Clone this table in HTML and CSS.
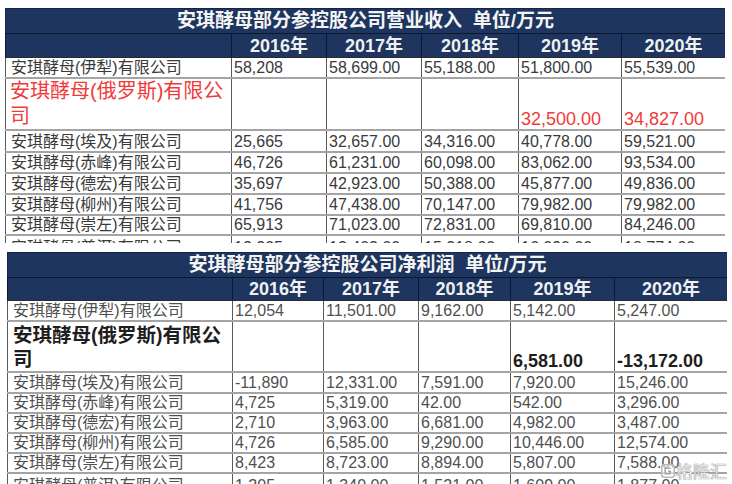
FILE: index.html
```html
<!DOCTYPE html>
<html lang="zh">
<head>
<meta charset="utf-8">
<link rel="stylesheet" href="styles.css">
</head>
<body>
<div class="page">
  <div class="clip clip-a">
    <table class="sheet sheet-a">
      <colgroup>
        <col class="c-name"><col class="c1"><col class="c2"><col class="c3"><col class="c4"><col class="c5">
      </colgroup>
      <tr class="title-row"><td colspan="6">安琪酵母部分参控股公司营业收入&nbsp;&nbsp;单位/万元</td></tr>
      <tr class="head-row"><td></td><td>2016年</td><td>2017年</td><td>2018年</td><td>2019年</td><td>2020年</td></tr>
      <tr class="r21"><td class="name">安琪酵母(伊犁)有限公司</td><td>58,208</td><td>58,699.00</td><td>55,188.00</td><td>51,800.00</td><td>55,539.00</td></tr>
      <tr class="tall red"><td class="name">安琪酵母(俄罗斯)有限公司</td><td></td><td></td><td></td><td>32,500.00</td><td>34,827.00</td></tr>
      <tr class="r22"><td class="name">安琪酵母(埃及)有限公司</td><td>25,665</td><td>32,657.00</td><td>34,316.00</td><td>40,778.00</td><td>59,521.00</td></tr>
      <tr class="r21"><td class="name">安琪酵母(赤峰)有限公司</td><td>46,726</td><td>61,231.00</td><td>60,098.00</td><td>83,062.00</td><td>93,534.00</td></tr>
      <tr class="r21"><td class="name">安琪酵母(德宏)有限公司</td><td>35,697</td><td>42,923.00</td><td>50,388.00</td><td>45,877.00</td><td>49,836.00</td></tr>
      <tr class="r21"><td class="name">安琪酵母(柳州)有限公司</td><td>41,756</td><td>47,438.00</td><td>70,147.00</td><td>79,982.00</td><td>79,982.00</td></tr>
      <tr class="r20"><td class="name">安琪酵母(崇左)有限公司</td><td>65,913</td><td>71,023.00</td><td>72,831.00</td><td>69,810.00</td><td>84,246.00</td></tr>
      <tr class="r23"><td class="name">安琪酵母(普洱)有限公司</td><td>12,305</td><td>13,402.00</td><td>15,218.00</td><td>16,090.00</td><td>18,774.00</td></tr>
    </table>
  </div>

  <div class="clip clip-b">
    <table class="sheet sheet-b">
      <colgroup>
        <col class="d-name"><col class="d1"><col class="d2"><col class="d3"><col class="d4"><col class="d5">
      </colgroup>
      <tr class="title-row"><td colspan="6">安琪酵母部分参控股公司净利润&nbsp;&nbsp;单位/万元</td></tr>
      <tr class="head-row h23"><td></td><td>2016年</td><td>2017年</td><td>2018年</td><td>2019年</td><td>2020年</td></tr>
      <tr class="r21"><td class="name">安琪酵母(伊犁)有限公司</td><td>12,054</td><td>11,501.00</td><td>9,162.00</td><td>5,142.00</td><td>5,247.00</td></tr>
      <tr class="tall2 bold"><td class="name">安琪酵母(俄罗斯)有限公司</td><td></td><td></td><td></td><td>6,581.00</td><td>-13,172.00</td></tr>
      <tr class="r21"><td class="name">安琪酵母(埃及)有限公司</td><td>-11,890</td><td>12,331.00</td><td>7,591.00</td><td>7,920.00</td><td>15,246.00</td></tr>
      <tr class="r20"><td class="name">安琪酵母(赤峰)有限公司</td><td>4,725</td><td>5,319.00</td><td>42.00</td><td>542.00</td><td>3,296.00</td></tr>
      <tr class="r20"><td class="name">安琪酵母(德宏)有限公司</td><td>2,710</td><td>3,963.00</td><td>6,681.00</td><td>4,982.00</td><td>3,487.00</td></tr>
      <tr class="r20"><td class="name">安琪酵母(柳州)有限公司</td><td>4,726</td><td>6,585.00</td><td>9,290.00</td><td>10,446.00</td><td>12,574.00</td></tr>
      <tr class="r19"><td class="name">安琪酵母(崇左)有限公司</td><td>8,423</td><td>8,723.00</td><td>8,894.00</td><td>5,807.00</td><td>7,588.00</td></tr>
      <tr class="r23"><td class="name">安琪酵母(普洱)有限公司</td><td>1,205</td><td>1,340.00</td><td>1,521.00</td><td>1,609.00</td><td>1,877.00</td></tr>
    </table>
  </div>

  <div class="watermark">
    <svg class="wm-icon" width="14" height="14" viewBox="0 0 14 14">
      <rect x="0.75" y="0.75" width="12.5" height="12.5" rx="2.5" fill="rgba(255,255,255,0.6)" stroke="#b8b8b8" stroke-width="1.5"/>
      <path d="M9.6 4.2 H4.2 V9.8 H9.2 V7.2 H7" fill="none" stroke="#a8a8a8" stroke-width="1.6"/>
    </svg>
    <span class="wm-text">格隆汇</span>
  </div>
</div>
</body>
</html>
```

FILE: styles.css
```css
html, body {
  margin: 0;
  padding: 0;
  background: #ffffff;
}

.page {
  position: relative;
  width: 732px;
  height: 484px;
  overflow: hidden;
  font-family: "Liberation Sans", "Noto Sans CJK SC", sans-serif;
}

.clip {
  overflow: hidden;
}

.clip-a {
  margin: 8px 0 0 5px;
  width: 720px;
  height: 235px;
}

.clip-b {
  margin: 9px 0 0 7px;
  width: 720px;
  height: 232px;
}

.sheet {
  border-collapse: collapse;
  table-layout: fixed;
  width: 720px;
}

.sheet td {
  padding: 0 0 0 2px;
  border-left: 1px solid #5a5a5a;
  border-right: 1px solid #5a5a5a;
  border-bottom: 2px solid #a4a4a4;
  font-size: 16px;
  line-height: 18px;
  color: #3a3a3a;
  vertical-align: bottom;
  white-space: nowrap;
  overflow: hidden;
}

.sheet-b td {
  color: #505050;
}

.sheet td.name {
  padding-left: 5px;
}

.c-name { width: 226px; }
.c1 { width: 95px; }
.c2 { width: 95px; }
.c3 { width: 97px; }
.c4 { width: 103px; }
.c5 { width: 104px; }

.d-name { width: 225px; }
.d1 { width: 91px; }
.d2 { width: 95px; }
.d3 { width: 92px; }
.d4 { width: 104px; }
.d5 { width: 113px; }

.title-row td {
  height: 24px;
  background: #1d355f;
  color: #f4f4f4;
  font-size: 19px;
  font-weight: bold;
  text-align: center;
  vertical-align: middle;
  border: 1px solid #14264a;
  border-bottom: 1px solid #0c1830;
  padding: 0;
}

.head-row td {
  height: 23px;
  background: #1d355f;
  color: #f0f0f0;
  font-size: 18px;
  font-weight: bold;
  text-align: center;
  vertical-align: middle;
  border-left: 1px solid #0c1830;
  border-right: 1px solid #0c1830;
  border-bottom: 1px solid #2a2a2a;
  padding: 0;
}

.head-row.h23 td { height: 22px; }

.r19 td { height: 17px; }
.r20 td { height: 18px; }
.r21 td { height: 19px; }
.r22 td { height: 20px; }
.r23 td { height: 21px; }

.tall td {
  height: 50px;
}

.red td {
  color: #f03a3a;
  font-size: 18px;
  line-height: 20px;
}

.red td.name {
  font-size: 20px;
  line-height: 25px;
  white-space: normal;
  vertical-align: top;
  padding-left: 4px;
}

.tall2 td {
  height: 46px;
}

.bold td {
  color: #1e1e1e;
  font-size: 18px;
  font-weight: bold;
  line-height: 20px;
}

.bold td.name {
  font-size: 19.5px;
  white-space: normal;
  vertical-align: top;
  line-height: 24px;
  padding-top: 1px;
  padding-left: 5px;
}

.watermark {
  position: absolute;
  left: 661px;
  top: 462px;
  display: flex;
  align-items: center;
  gap: 1px;
}

.wm-text {
  font-family: "Noto Sans CJK SC", sans-serif;
  font-size: 17px;
  line-height: 17px;
  color: #e6e6e6;
  text-shadow: 0 0 1px #8a8a8a, 0 0 1px #8a8a8a;
}
```
